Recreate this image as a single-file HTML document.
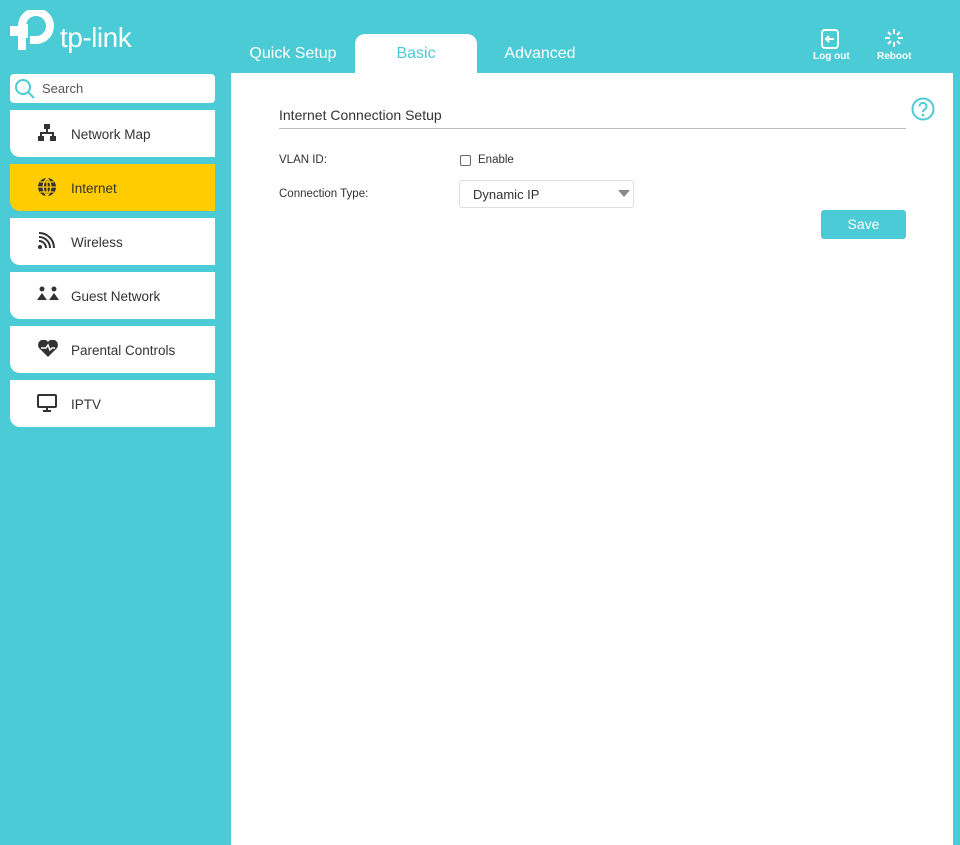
<!DOCTYPE html>
<html><head><style>
*{margin:0;padding:0;box-sizing:border-box}
body{width:960px;height:845px;background:#4acbd6;font-family:"Liberation Sans",sans-serif;position:relative;overflow:hidden}
.abs{position:absolute}
.tab{position:absolute;top:34px;height:39px;width:122px;color:#fff;font-size:16px;text-align:center;line-height:40px}
.item{position:absolute;left:10px;width:205px;height:47px;background:#fff;border-radius:0 0 0 10px;font-size:13.5px;color:#333;line-height:49px;padding-left:61px}
.item svg{position:absolute;left:27px;top:14px}
.panel{position:absolute;left:231px;top:73px;width:722px;height:772px;background:#fff}
.lbl{position:absolute;font-size:11.5px;color:#333}
</style></head><body>
<svg class="abs" style="left:8px;top:10px" width="50" height="46" viewBox="0 0 50 46">
<path d="M12 14 H20 V28 H12 Z M2 16 h14 v10 h-14z" fill="#fff"/>
<path d="M14 40 V16 A14 14 0 1 1 28 30 H22" stroke="#fff" stroke-width="8" fill="none"/>
</svg>
<div class="abs" style="left:60px;top:22px;color:#fff;font-size:28px;letter-spacing:-0.5px">tp-link</div>
<div class="tab" style="left:232px">Quick Setup</div>
<div class="tab" style="left:355px;background:#fff;color:#4acbd6;border-radius:10px 10px 0 0">Basic</div>
<div class="tab" style="left:479px">Advanced</div>
<svg class="abs" style="left:820px;top:29px" width="20" height="20" viewBox="0 0 20 20"><rect x="2" y="1" width="16" height="18" rx="3" stroke="#fff" stroke-width="2" fill="none"/><path d="M14 10H6M9 7l-3 3 3 3" stroke="#fff" stroke-width="2" fill="none"/></svg>
<div class="abs" style="left:813px;top:51px;color:#fff;font-size:10px;font-weight:bold">Log out</div>
<svg class="abs" style="left:884px;top:28px" width="20" height="20" viewBox="0 0 20 20" stroke="#fff" stroke-width="2"><path d="M10 1v5M10 14v5M1 10h5M14 10h5M4 4l3 3M13 13l3 3M4 16l3-3M13 7l3-3"/></svg>
<div class="abs" style="left:877px;top:51px;color:#fff;font-size:10px;font-weight:bold">Reboot</div>
<div class="abs" style="left:10px;top:74px;width:205px;height:29px;background:#fff;border-radius:4px"></div>
<svg class="abs" style="left:14px;top:78px" width="22" height="22" viewBox="0 0 22 22"><circle cx="9" cy="9" r="7" stroke="#4acbd6" stroke-width="2" fill="none"/><path d="M14 14l6 6" stroke="#4acbd6" stroke-width="2"/></svg>
<div class="abs" style="left:42px;top:81px;font-size:13px;color:#555">Search</div>
<div class="item" style="top:110px"><svg width="20" height="18" viewBox="0 0 20 18" fill="#333"><rect x="7" y="0" width="6" height="5"/><rect x="1" y="12" width="6" height="5"/><rect x="13" y="12" width="6" height="5"/><path d="M10 5v4M4 12V9h12v3" stroke="#333" stroke-width="2" fill="none"/></svg>Network Map</div>
<div class="item" style="top:164px;background:#ffcc00"><svg width="20" height="20" viewBox="0 0 20 20" style="top:13px"><circle cx="10" cy="10" r="9" fill="#333"/><path d="M1 10h18M10 1v18M3 5h14M3 15h14M10 1c-5 5-5 13 0 18M10 1c5 5 5 13 0 18" stroke="#ffcc00" stroke-width="1.3" fill="none"/></svg>Internet</div>
<div class="item" style="top:218px"><svg width="18" height="18" viewBox="0 0 18 18"><circle cx="3" cy="15" r="2" fill="#333"/><path d="M2 9a7 7 0 0 1 7 7M2 5a11 11 0 0 1 11 11M2 1a15 15 0 0 1 15 15" stroke="#333" stroke-width="2" fill="none"/></svg>Wireless</div>
<div class="item" style="top:272px"><svg width="22" height="16" viewBox="0 0 22 16" fill="#333"><circle cx="5" cy="3" r="2.5"/><circle cx="17" cy="3" r="2.5"/><path d="M0 14l5-7 5 7zM12 14l5-7 5 7zM8 7l3 3 3-3-3 3z"/></svg>Guest Network</div>
<div class="item" style="top:326px"><svg width="22" height="18" viewBox="0 0 22 18"><path d="M11 17L2 8a5 5 0 0 1 9-6 5 5 0 0 1 9 6z" fill="#333"/><path d="M4 8h5l2-3 2 5 2-2h3" stroke="#fff" stroke-width="1.5" fill="none"/></svg>Parental Controls</div>
<div class="item" style="top:380px"><svg width="20" height="18" viewBox="0 0 20 18"><rect x="1" y="1" width="18" height="12" rx="1" stroke="#333" stroke-width="2" fill="none"/><path d="M6 17h8M10 13v4" stroke="#333" stroke-width="2"/></svg>IPTV</div>
<div class="panel"></div>
<div class="abs" style="left:279px;top:107px;font-size:14px;color:#333">Internet Connection Setup</div>
<div class="abs" style="left:279px;top:128px;width:627px;height:1px;background:#bbb"></div>
<svg class="abs" style="left:911px;top:97px" width="24" height="24" viewBox="0 0 24 24"><circle cx="12" cy="12" r="10.5" stroke="#4acbd6" stroke-width="2" fill="none"/><path d="M8.5 9.5a3.5 3.5 0 1 1 5 3c-1.2.6-1.5 1.2-1.5 2.5" stroke="#4acbd6" stroke-width="2" fill="none"/><circle cx="12" cy="18" r="1.3" fill="#4acbd6"/></svg>
<div class="lbl" style="left:279px;top:154px">VLAN ID:</div>
<div class="abs" style="left:460px;top:155px;width:11px;height:11px;border:1px solid #666;border-radius:2px"></div>
<div class="lbl" style="left:478px;top:154px">Enable</div>
<div class="lbl" style="left:279px;top:188px">Connection Type:</div>
<div class="abs" style="left:459px;top:180px;width:175px;height:28px;border:1px solid #ddd;border-radius:3px;font-size:13px;color:#333;line-height:28px;padding-left:13px">Dynamic IP</div>
<div class="abs" style="left:618px;top:190px;width:0;height:0;border-left:6px solid transparent;border-right:6px solid transparent;border-top:7px solid #888"></div>
<div class="abs" style="left:821px;top:210px;width:85px;height:29px;background:#4acbd6;border-radius:3px;color:#fff;font-size:14px;text-align:center;line-height:28px">Save</div>
</body></html>
